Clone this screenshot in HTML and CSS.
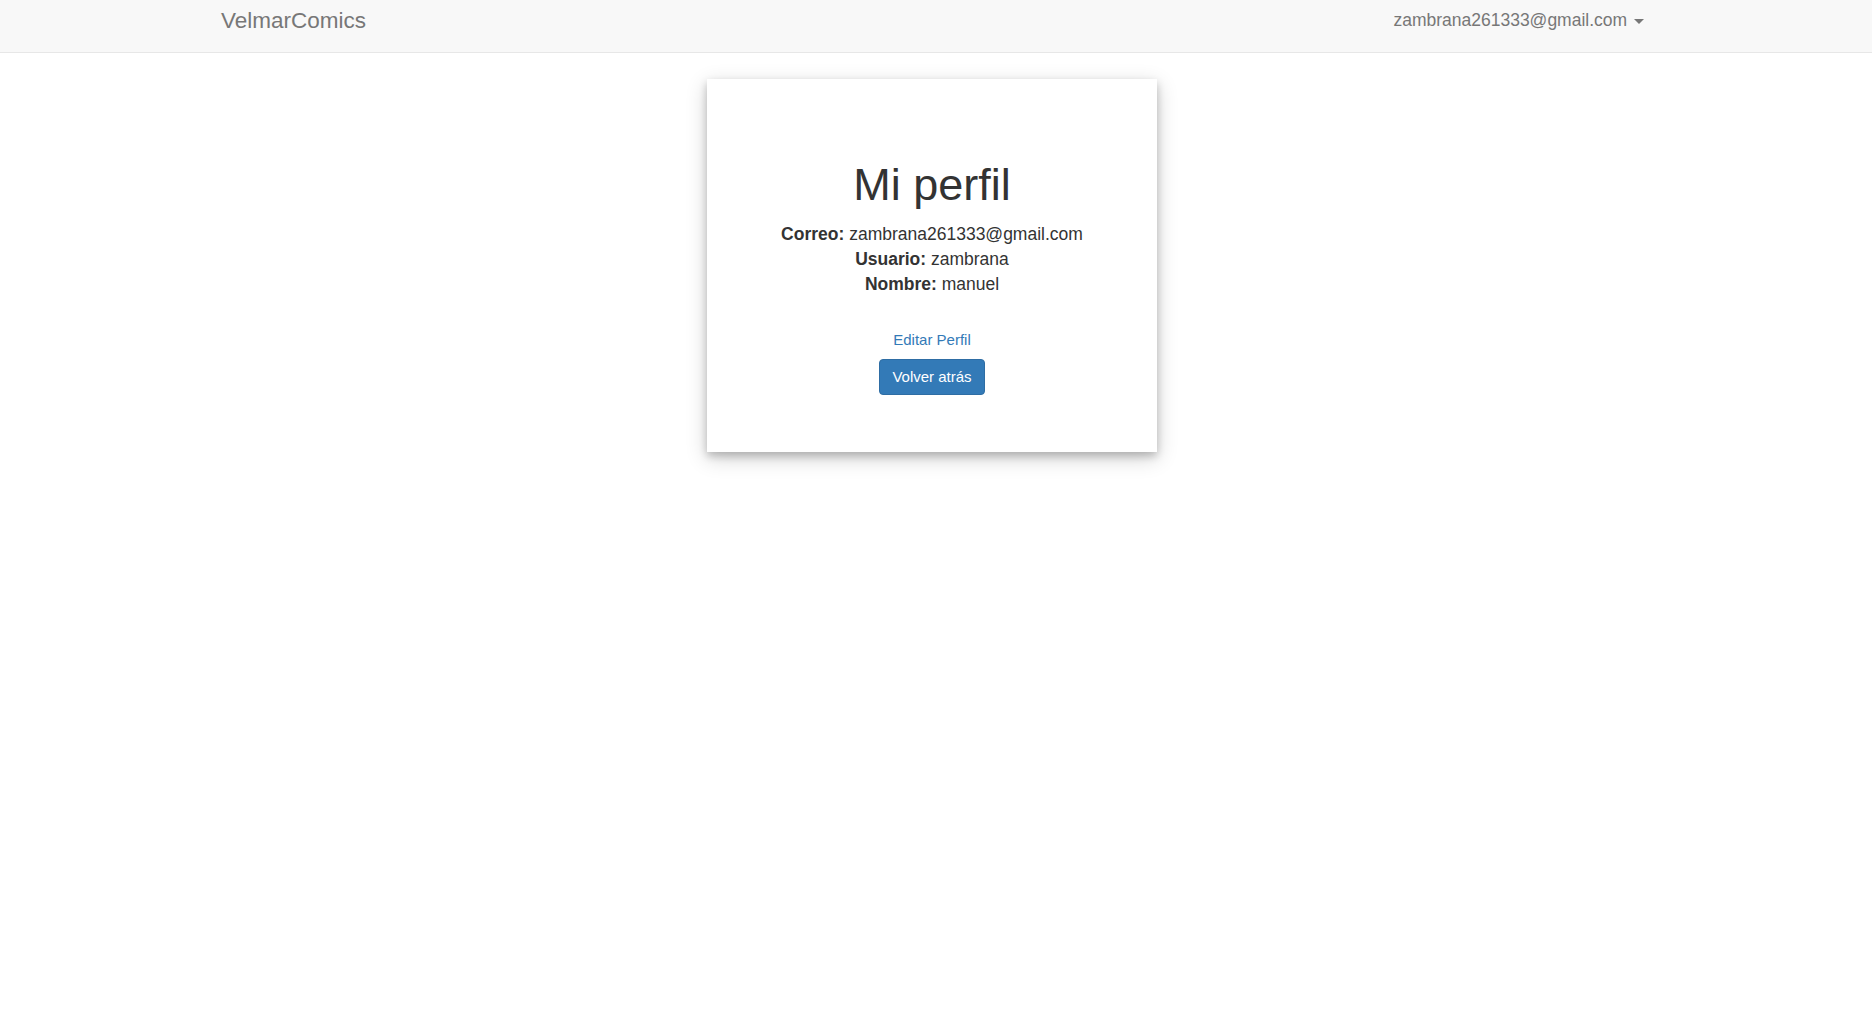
FILE: index.html
```html
<!DOCTYPE html>
<html lang="es">
<head>
<meta charset="utf-8">
<title>Mi perfil - VelmarComics</title>
<link rel="stylesheet" href="styles.css">
</head>
<body>
<nav class="navbar">
  <a class="brand" href="#">VelmarComics</a>
  <a class="user" href="#">zambrana261333@gmail.com <span class="caret"></span></a>
</nav>
<main class="main">
  <section class="card">
    <h1 class="title">Mi perfil</h1>
    <p class="info"><b>Correo:</b> zambrana261333@gmail.com</p>
    <p class="info"><b>Usuario:</b> zambrana</p>
    <p class="info"><b>Nombre:</b> manuel</p>
    <a class="edit" href="#">Editar Perfil</a>
    <a class="btn" href="#">Volver atrás</a>
  </section>
</main>
</body>
</html>
```
FILE: styles.css
```css
* { box-sizing: border-box; }
html, body { margin: 0; padding: 0; height: 100%; }
body {
  font-family: "Liberation Sans", Arial, sans-serif;
  color: #333;
  background: #fff;
  min-height: 100vh;
}
a { text-decoration: none; }

.navbar {
  height: 53px;
  background: #f8f8f8;
  border-bottom: 1px solid #e7e7e7;
  display: flex;
  justify-content: space-between;
  align-items: flex-start;
  padding: 8px 228px 0 221px;
}
.brand {
  font-size: 22.5px;
  line-height: 25px;
  color: #777;
}
.user {
  font-size: 17.5px;
  line-height: 25px;
  color: #777;
  white-space: nowrap;
}
.caret {
  display: inline-block;
  width: 0;
  height: 0;
  margin-left: 2px;
  vertical-align: middle;
  border-top: 5px solid #777;
  border-left: 5px solid transparent;
  border-right: 5px solid transparent;
}

.main {
  display: flex;
  justify-content: center;
  align-items: flex-start;
  padding: 26px 8px 60px 0;
}
.card {
  width: 450px;
  background: #fff;
  padding: 81px 20px 57px;
  text-align: center;
  display: flex;
  flex-direction: column;
  align-items: center;
  box-shadow: 0 4px 8px 0 rgba(0,0,0,0.2), 0 6px 20px 0 rgba(0,0,0,0.19);
}
.title {
  font-size: 45px;
  line-height: 49.5px;
  font-weight: 500;
  margin: 0 0 12px;
  color: #333;
}
.info {
  font-size: 17.5px;
  line-height: 25px;
  margin: 0;
}
.info b { font-weight: 700; }
.edit {
  margin-top: 32px;
  font-size: 15px;
  line-height: 21.4px;
  color: #337ab7;
}
.btn {
  margin-top: 9px;
  display: inline-block;
  font-size: 15px;
  line-height: 22px;
  padding: 6px 12.5px;
  color: #fff;
  background: #337ab7;
  border: 1px solid #2e6da4;
  border-radius: 4px;
}
```
